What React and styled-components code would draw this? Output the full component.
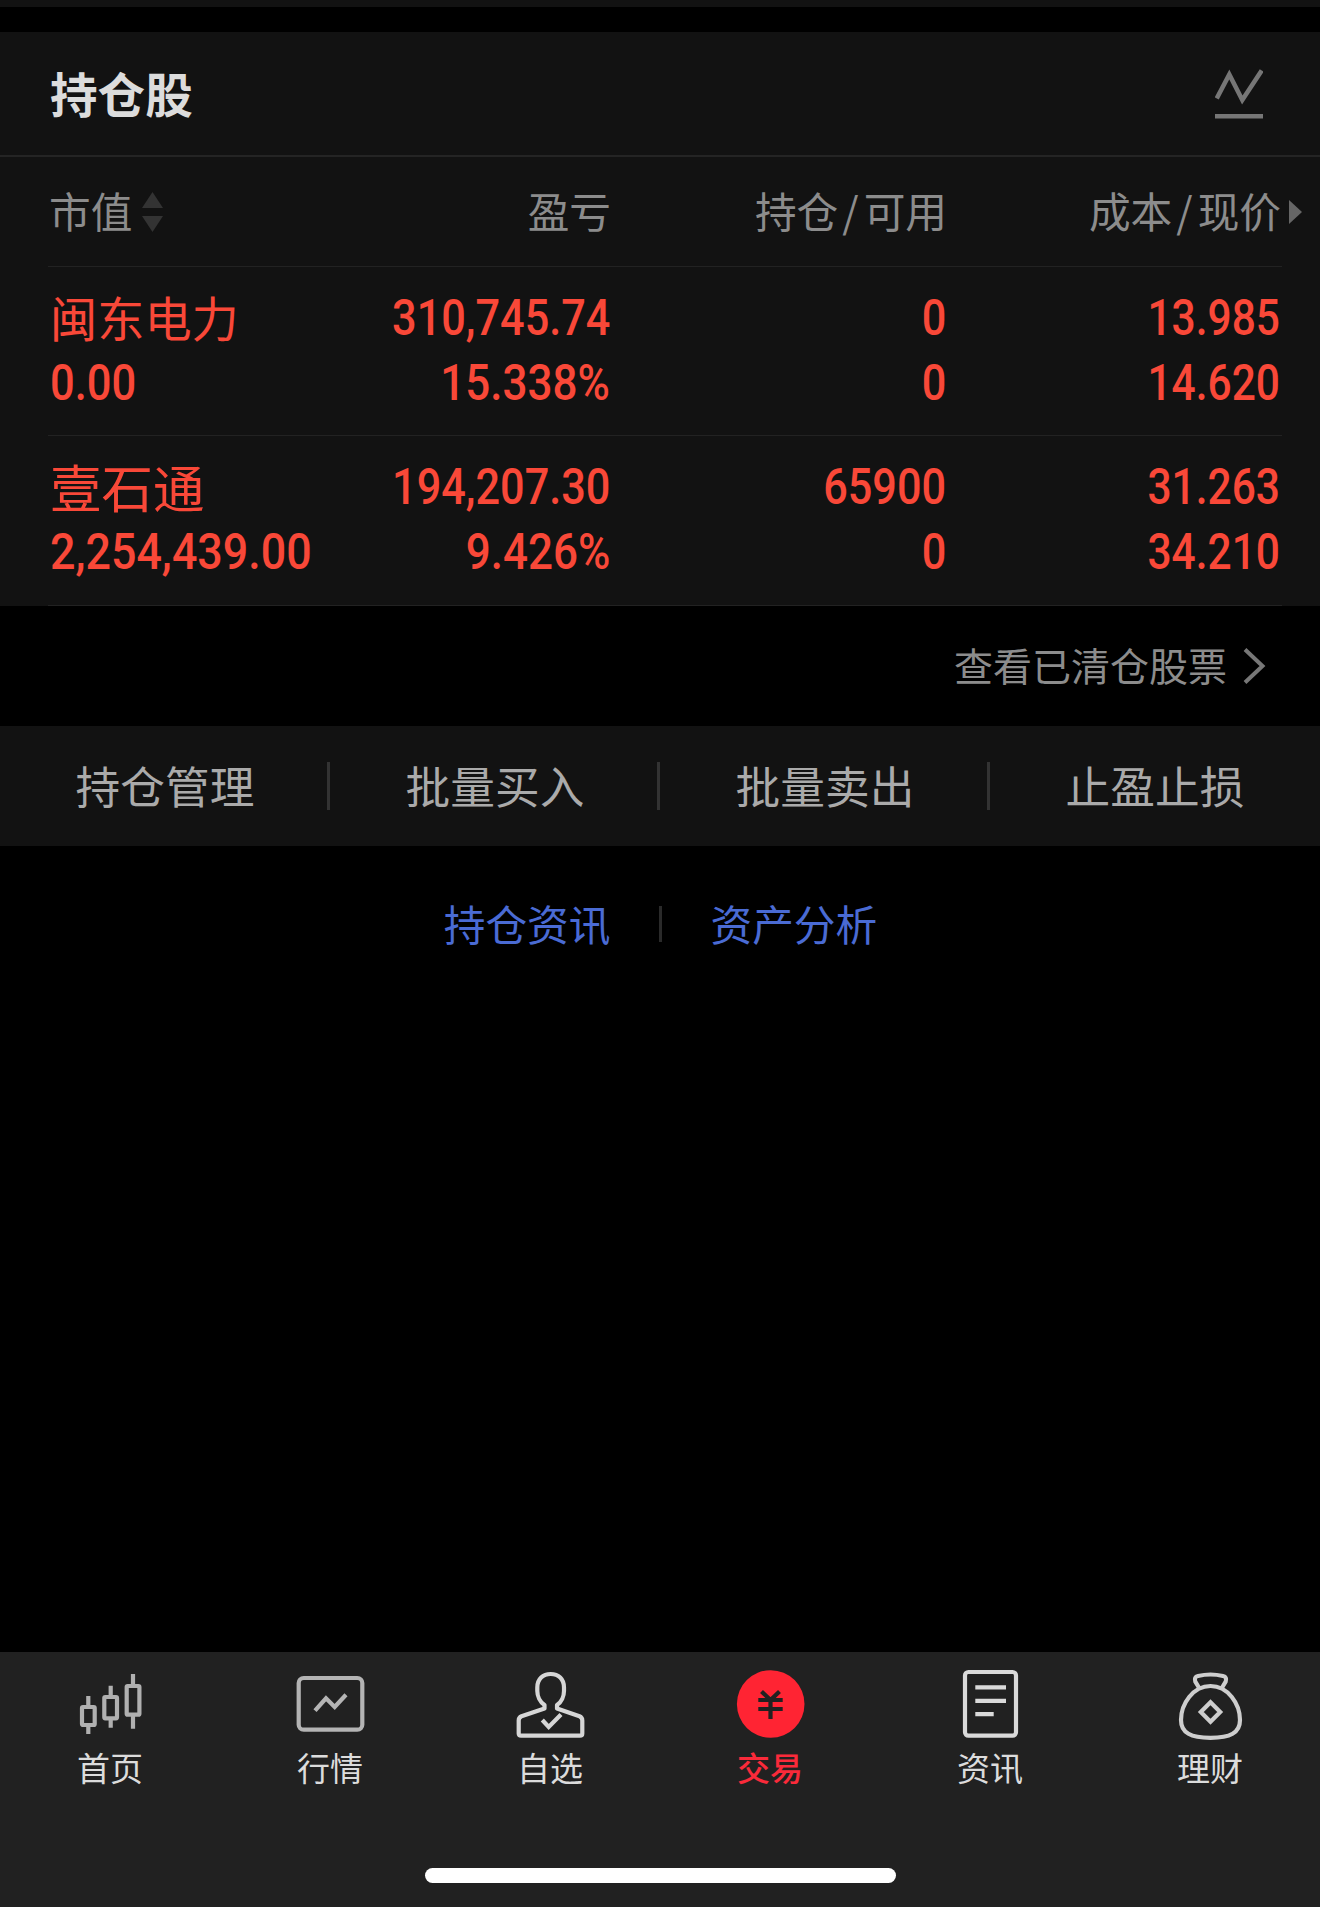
import React from 'react'
import styled, { createGlobalStyle } from 'styled-components'


const GlobalStyle = createGlobalStyle`
  * {
    box-sizing: border-box;
  }
  body {
    margin: 0;
    background: #000;
    font-family: "Noto Sans CJK SC", sans-serif;
  }
`;

const Page = styled.div`
  display: flex;
  flex-direction: column;
  width: 1320px;
  height: 1907px;
  background: #000;
  overflow: hidden;
`;

const TopEdge = styled.div`
  height: 7px;
  margin-bottom: 25px;
  background: #121212;
`;

const Panel = styled.section`
  background: #121212;
`;

const PanelHeader = styled.header`
  display: flex;
  justify-content: space-between;
  align-items: center;
  height: 125px;
  padding: 0 57px 1px 50px;
  border-bottom: 2px solid #242424;
`;

const Title = styled.h1`
  margin: 0;
  padding-bottom: 1px;
  font-size: 47.6px;
  font-weight: 700;
  line-height: 60px;
  color: #dcdcdc;
`;

const Row = styled.div`
  display: grid;
  grid-template-columns: 302px 262px 336px 334px;
  margin-left: 48px;
  width: 1234px;
  height: ${props => props.$height}px;
  padding-top: ${props => props.$top}px;
  border-bottom: 1px solid #222;
`;

const HeadCell = styled.div`
  display: flex;
  align-items: center;
  justify-content: ${props => props.$left ? 'flex-start' : 'flex-end'};
  height: 60px;
  padding: 0 1px;
  font-size: 41.7px;
  line-height: 60px;
  color: #8c8c8c;
  white-space: nowrap;
`;

const Slash = styled.span`
  margin: 0 5px 0 4px;
`;

const SortIcon = styled.svg`
  margin: 3px 0 0 10px;
`;

// hangs in the right gutter, outside of the last column
const MoreArrow = styled.svg`
  margin: 4px -21px 0 8px;
`;

const Cell = styled.div`
  display: flex;
  flex-direction: column;
  align-items: ${props => props.$left ? 'flex-start' : 'flex-end'};
  padding: 0 2px;
  color: #f94838;
`;

const StockName = styled.div`
  height: 65px;
  font-size: ${props => props.$size}px;
  line-height: 61px;
  white-space: nowrap;
`;

const Num = styled.div`
  height: 65px;
  font-family: Roboto, sans-serif;
  font-size: 50px;
  font-weight: 500;
  line-height: 65px;
  white-space: nowrap;
  transform: scaleX(${props => props.$scale || 0.865});
  transform-origin: ${props => props.$left ? 'left' : 'right'} center;
`;

const ClearedLink = styled.div`
  display: flex;
  justify-content: flex-end;
  align-items: center;
  height: 120px;
  padding: 0 54px 4px 0;
  gap: 15px;
  font-size: 39px;
  line-height: 56px;
  color: #8c8c8c;
`;

const Chevron = styled.svg`
  margin-top: 4px;
`;

const Actions = styled.nav`
  display: grid;
  grid-template-columns: repeat(4, 330px);
  align-items: center;
  height: 120px;
  background: #121212;
`;

const Action = styled.div`
  display: flex;
  align-items: center;
  justify-content: center;
  height: 48px;
  padding: 0 0 2px 3px;
  font-size: 44.7px;
  line-height: 46px;
  color: #aaa;
  border-right: ${props => props.$last ? '3px solid transparent' : '3px solid #333'};
`;

const Links = styled.div`
  display: flex;
  align-items: center;
  justify-content: center;
  height: 156px;
  padding: 0 0 2px 1px;
  font-size: 41.7px;
  line-height: 60px;
  color: #4a6bd4;
`;

const LinkDivider = styled.span`
  width: 3px;
  height: 36px;
  margin: 2px 49px 0 48px;
  background: #2a2a2a;
`;

const TabBar = styled.footer`
  display: flex;
  flex-direction: column;
  align-items: center;
  height: 255px;
  margin-top: auto;
  background: #212121;
`;

const Tabs = styled.div`
  display: grid;
  grid-template-columns: repeat(6, 220px);
  height: 216px;
  padding-top: 12px;
`;

const Tab = styled.div`
  display: flex;
  flex-direction: column;
  align-items: center;
  font-size: 33px;
  line-height: 47px;
  font-weight: ${props => props.$active ? 500 : 400};
  color: ${props => props.$active ? '#fa2a3a' : '#dcdcdc'};
`;

const TabIcon = styled.svg`
  width: 72px;
  height: 80px;
  fill: none;
  stroke: ${props => props.$color};
  stroke-width: 4.2;
`;

const HomeIndicator = styled.div`
  width: 471px;
  height: 15px;
  border-radius: 8px;
  background: #fff;
`;

const holdings = [
  {
    name: '闽东电力', size: 47.2, value: '0.00',
    profit: '310,745.74', rate: '15.338%',
    held: '0', usable: '0',
    cost: '13.985', price: '14.620'
  },
  {
    name: '壹石通', size: 51.5, value: '2,254,439.00',
    profit: '194,207.30', rate: '9.426%',
    held: '65900', usable: '0',
    cost: '31.263', price: '34.210'
  }
]

const actions = ['持仓管理', '批量买入', '批量卖出', '止盈止损']

const tabs = [
  {
    label: '首页', color: '#b0b0b0',
    icon: <>
      <rect x="8" y="43" width="12.7" height="18" rx="1" />
      <path d="M14.3 32v10M14.3 62v8" />
      <rect x="30.3" y="33" width="12.7" height="21.3" rx="1" />
      <path d="M36.7 21.7v10M36.7 55.5v8.3" />
      <rect x="52.7" y="22" width="12.7" height="28.7" rx="1" />
      <path d="M59 10v11M59 52v12.8" />
    </>
  },
  {
    label: '行情', color: '#b4b4b4',
    icon: <>
      <rect x="4.7" y="14" width="63.6" height="51.7" rx="5" />
      <path d="M21 46.7L32 34.3L40.7 43L52 30.8" />
    </>
  },
  {
    label: '自选', color: '#d6d6d6',
    icon: <>
      <path d="M30.5 44.5V41C26 38 23.3 32 23.3 27V23.5C23.3 15 29 10 36.7 10S50 15 50 23.5V27C50 32 47.5 38 43 41V44.5L65.5 52.3Q68.3 53.5 68.3 56.5V69.5Q68.3 71.7 66 71.7H7Q4.7 71.7 4.7 69.5V56.5Q4.7 53.5 7.5 52.3Z" strokeLinejoin="round" />
      <path d="M28.3 56L34.7 63L47 50.5" />
    </>
  },
  {
    label: '交易', color: '#212121', active: true,
    icon: <>
      <circle cx="36.7" cy="40" r="33.8" fill="#ff2433" stroke="none" />
      <path d="M27.5 27.5L36.5 36L45.5 27.5M24.3 36H48.7M24.3 45H48.7M36.5 35V55" />
    </>
  },
  {
    label: '资讯', color: '#dadada',
    icon: <>
      <rect x="11" y="8" width="51" height="63.7" rx="3.5" />
      <path d="M21.3 23.4H52M21.3 36.8H52M21.3 50.1H39.7" />
    </>
  },
  {
    label: '理财', color: '#cecece',
    icon: <>
      <path d="M36.5 22C19 22 7 40 7 56C7 69 17 73.8 36.5 73.8S66 69 66 56C66 40 54 22 36.5 22Z" />
      <path d="M25.5 24.5L21.3 17.5Q19.8 13 24 12Q36.5 9 49 12Q53.2 13 51.7 17.5L47.5 24.5" />
      <path d="M36.5 38.3L46.2 48L36.5 57.7L26.8 48Z" />
    </>
  }
]

function Holding({ stock }) {
  return (
    <Row $height={stock.size > 50 ? 170 : 169} $top={19}>
      <Cell $left>
        <StockName $size={stock.size}>{stock.name}</StockName>
        <Num $left $scale={stock.value.length > 10 ? 0.896 : 0.87}>{stock.value}</Num>
      </Cell>
      <Cell>
        <Num>{stock.profit}</Num>
        <Num $scale={0.88}>{stock.rate}</Num>
      </Cell>
      <Cell>
        <Num>{stock.held}</Num>
        <Num>{stock.usable}</Num>
      </Cell>
      <Cell>
        <Num $scale={0.85}>{stock.cost}</Num>
        <Num $scale={0.85}>{stock.price}</Num>
      </Cell>
    </Row>
  )
}

function App() {
  return (
    <Page>
      <GlobalStyle />
      <TopEdge />
      <Panel>
        <PanelHeader>
          <Title>持仓股</Title>
          <svg width="48" height="52" viewBox="0 0 48 52" fill="none" stroke="#767676" strokeWidth="4.6">
            <path d="M1.7 31.5L14.3 7.5L27.3 33L46.7 3.5" />
            <path d="M0 49.3H48" />
          </svg>
        </PanelHeader>
        <Row $height={110} $top={23}>
          <HeadCell $left>
            市值
            <SortIcon width="21" height="40" viewBox="0 0 21 40" fill="#333">
              <path d="M10.5 0L21 16H0ZM0 24H21L10.5 40Z" />
            </SortIcon>
          </HeadCell>
          <HeadCell>盈亏</HeadCell>
          <HeadCell>持仓<Slash>/</Slash>可用</HeadCell>
          <HeadCell>
            成本<Slash>/</Slash>现价
            <MoreArrow width="13" height="24" viewBox="0 0 13 24" fill="#666">
              <path d="M0 0L13 12L0 24Z" />
            </MoreArrow>
          </HeadCell>
        </Row>
        {holdings.map((stock, key) => <Holding key={key} stock={stock} />)}
      </Panel>
      <ClearedLink>
        查看已清仓股票
        <Chevron width="24" height="38" viewBox="0 0 24 38" fill="none" stroke="#777" strokeWidth="4">
          <path d="M3 2.5L20.5 19L3 35.5" />
        </Chevron>
      </ClearedLink>
      <Actions>
        {actions.map((action, key) => (
          <Action key={key} $last={key == actions.length - 1}>{action}</Action>
        ))}
      </Actions>
      <Links>
        <span>持仓资讯</span>
        <LinkDivider />
        <span>资产分析</span>
      </Links>
      <TabBar>
        <Tabs>
          {tabs.map(tab => (
            <Tab key={tab.label} $active={tab.active}>
              <TabIcon viewBox="0 0 72 80" $color={tab.color}>{tab.icon}</TabIcon>
              {tab.label}
            </Tab>
          ))}
        </Tabs>
        <HomeIndicator />
      </TabBar>
    </Page>
  )
}

export default App;
